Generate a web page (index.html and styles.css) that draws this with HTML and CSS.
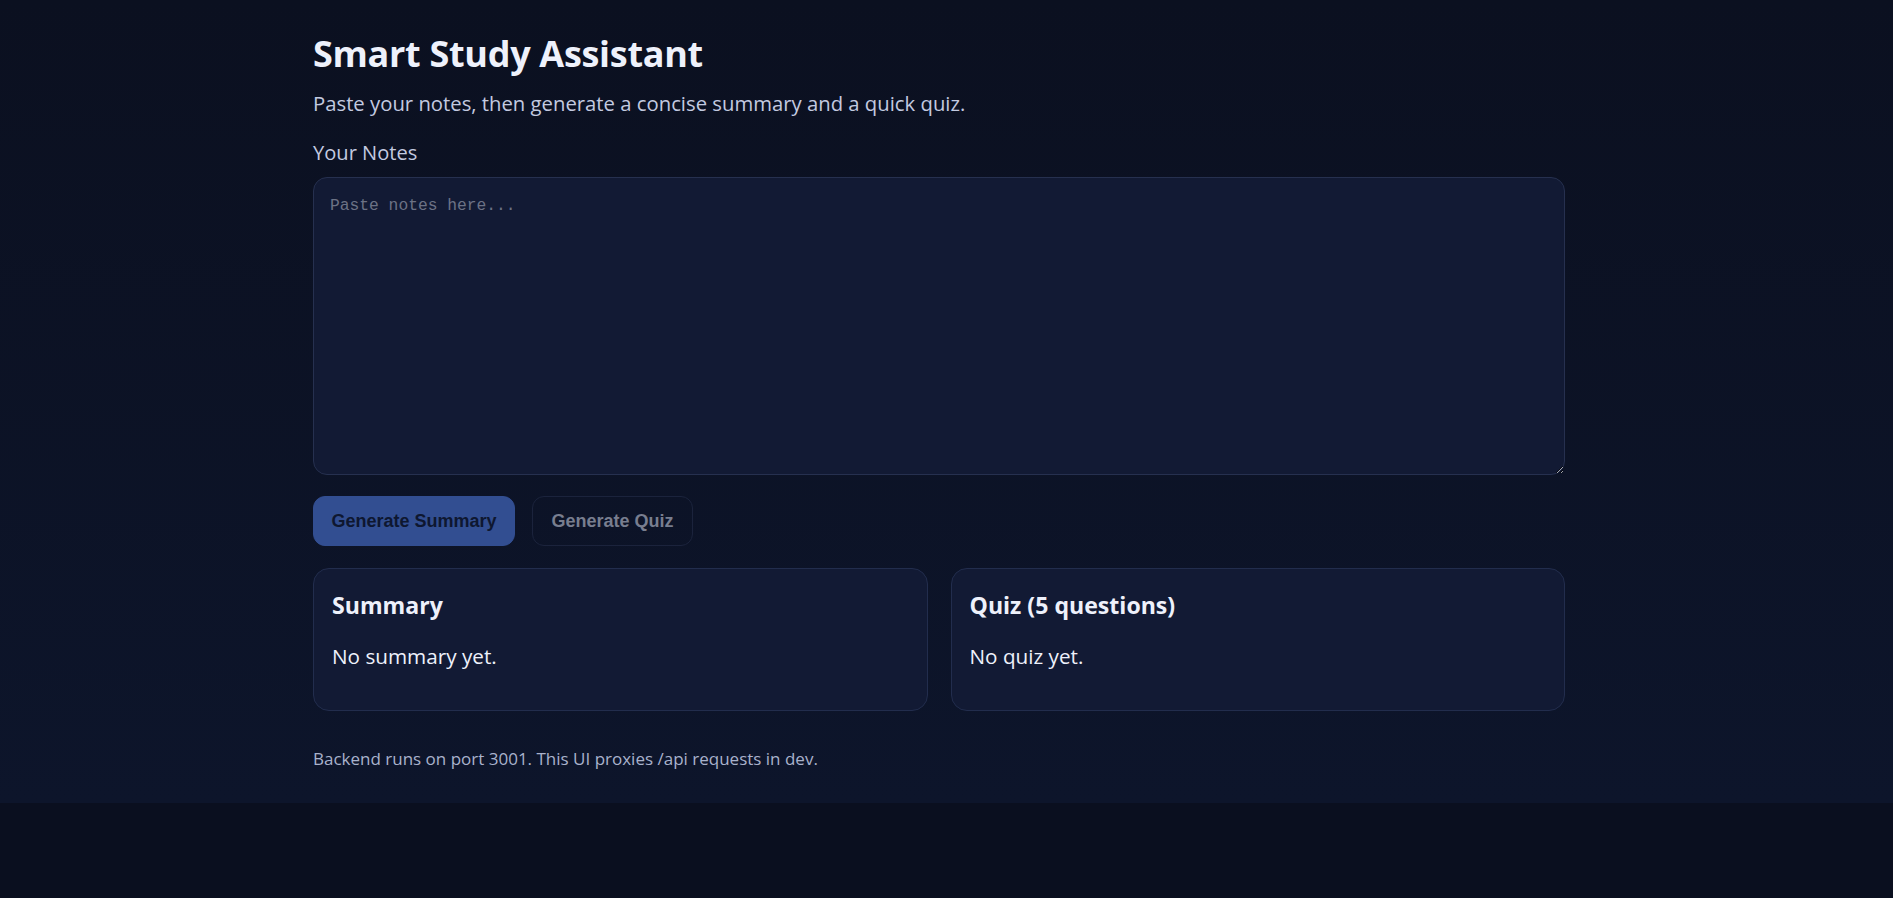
FILE: index.html
```html
<!DOCTYPE html>
<html lang="en">
<head>
<meta charset="utf-8">
<title>Smart Study Assistant</title>
<link rel="stylesheet" href="styles.css">
</head>
<body>
<div class="page">
  <main class="container">
    <h1 class="title">Smart Study Assistant</h1>
    <p class="subtitle">Paste your notes, then generate a concise summary and a quick quiz.</p>
    <label class="label" for="notes">Your Notes</label>
    <textarea id="notes" class="notes" placeholder="Paste notes here..."></textarea>
    <div class="actions">
      <button class="btn btn-primary">Generate Summary</button>
      <button class="btn btn-secondary" disabled>Generate Quiz</button>
    </div>
    <div class="cards">
      <section class="card">
        <h3 class="card-title">Summary</h3>
        <p class="card-text">No summary yet.</p>
      </section>
      <section class="card">
        <h3 class="card-title">Quiz (5 questions)</h3>
        <p class="card-text">No quiz yet.</p>
      </section>
    </div>
    <p class="footer">Backend runs on port 3001. This UI proxies /api requests in dev.</p>
  </main>
</div>
</body>
</html>
```

FILE: styles.css
```css
html, body {
  margin: 0;
  padding: 0;
  background: #0a0f1f;
  color-scheme: dark;
}
body {
  font-family: "Open Sans", "Noto Sans", sans-serif;
  min-height: 898px;
}
.page {
  background: linear-gradient(180deg, #0b1020 0%, #0d152b 100%);
}
.container {
  width: 1252px;
  margin-left: 313px;
  padding: 31px 0 32px;
  display: flex;
  flex-direction: column;
}
.title {
  margin: 0;
  font-size: 36px;
  line-height: 46px;
  font-weight: 700;
  color: #eef1fb;
  letter-spacing: -0.3px;
}
.subtitle {
  margin: 12px 0 0;
  font-size: 20.3px;
  line-height: 28px;
  color: #c3cae0;
}
.label {
  margin-top: 22px;
  font-size: 20.1px;
  line-height: 28px;
  color: #c3cae0;
}
.notes {
  margin-top: 10px;
  box-sizing: border-box;
  width: 1252px;
  height: 298px;
  padding: 16px;
  background: #121a34;
  border: 1px solid #26304f;
  border-radius: 14px;
  color: #e6e9f5;
  font-family: "Liberation Mono", "DejaVu Sans Mono", monospace;
  font-size: 16.3px;
  line-height: 24px;
  outline: none;
  resize: vertical;
}
.notes::placeholder {
  color: #6c7285;
}
.actions {
  margin-top: 21px;
  display: flex;
  gap: 17px;
}
.btn {
  height: 50px;
  box-sizing: border-box;
  border-radius: 12px;
  font-family: "Liberation Sans", Arial, sans-serif;
  font-weight: 700;
  font-size: 18px;
  padding: 0;
  white-space: nowrap;
  text-align: center;
  cursor: pointer;
}
.btn-primary {
  width: 202px;
  background: #324e91;
  color: #0e1730;
  border: 1px solid #324e91;
}
.btn-secondary {
  width: 161px;
  background: transparent;
  color: #787e8f;
  border: 1px solid #1b233c;
}
.cards {
  margin-top: 22px;
  display: grid;
  grid-template-columns: 1fr 1fr;
  gap: 23px;
}
.card {
  box-sizing: border-box;
  height: 143px;
  padding: 21px 18px 0;
  background: #121a34;
  border: 1px solid #222d4d;
  border-radius: 16px;
}
.card-title {
  margin: 0;
  font-size: 23.1px;
  line-height: 30px;
  font-weight: 700;
  color: #eef1fb;
}
.card-text {
  margin: 21px 0 0;
  font-size: 20.7px;
  line-height: 30px;
  color: #eef1fb;
}
.footer {
  margin: 36px 0 0;
  font-size: 17px;
  line-height: 24px;
  color: #a9b2cc;
}
```
